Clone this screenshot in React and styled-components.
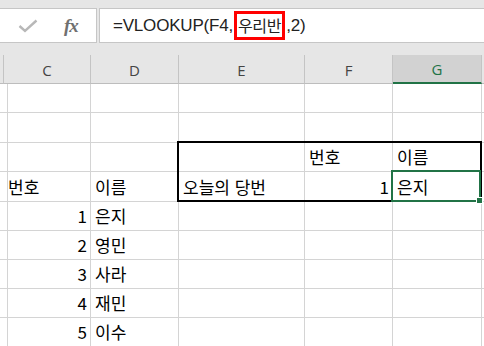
import React from "react";
import styled, { createGlobalStyle } from "styled-components";

const GlobalStyle = createGlobalStyle`
  html, body {
    margin: 0;
    padding: 0;
    background: #fff;
  }
  body {
    width: 484px;
    height: 346px;
    overflow: hidden;
    font-family: "Noto Sans CJK KR", sans-serif;
  }
`;

const Page = styled.div`
  display: flex;
  flex-direction: column;
  width: 484px;
  height: 346px;
  overflow: hidden;
  background: #e6e6e6;
`;

const FormulaBar = styled.div`
  display: flex;
  gap: 2px;
  padding-top: 8px;
  padding-bottom: 12px;
`;

const NameBox = styled.div`
  box-sizing: border-box;
  width: 97px;
  height: 35px;
  background: #fff;
  border: 1px solid #c6c6c6;
  border-left: none;
  display: flex;
  align-items: center;
  padding-left: 18px;
`;

const Fx = styled.span`
  margin-left: 26px;
  font-family: "Liberation Serif", serif;
  font-style: italic;
  font-weight: bold;
  font-size: 19px;
  color: #707070;
  letter-spacing: -1px;
`;

const FormulaInput = styled.div`
  box-sizing: border-box;
  flex: 1;
  height: 35px;
  background: #fff;
  border: 1px solid #c6c6c6;
  border-right: none;
  display: flex;
  align-items: center;
  padding-left: 13px;
  font-family: "Liberation Sans", "Noto Sans CJK KR", sans-serif;
  font-size: 17px;
  letter-spacing: -0.2px;
  color: #222;
  white-space: nowrap;
`;

const Highlight = styled.span`
  display: inline-block;
  border: 3px solid #ff0000;
  padding: 2px 1px;
  margin: 0 1px 0 1px;
  line-height: 19px;
  font-family: "Noto Sans CJK KR", sans-serif;
  font-size: 16px;
  letter-spacing: -0.3px;
`;

const Sheet = styled.div`
  display: grid;
  grid-template-columns: 4px 87px 88px 126px 88px 89px 1fr;
  grid-template-rows: 29px 29px 30px 29px 30px 29px 29px 29px 29px 29px;
  background: #fff;
`;

const HeadCell = styled.div`
  box-sizing: border-box;
  background: ${(p) => (p.$active ? "#d2d2d2" : "#e6e6e6")};
  border-right: 1px solid #c4c4c4;
  border-bottom: ${(p) => (p.$active ? "2px solid #217346" : "1px solid #bdbdbd")};
  display: flex;
  align-items: center;
  justify-content: center;
  font-family: "Open Sans", "Noto Sans", sans-serif;
  font-size: 15px;
  color: ${(p) => (p.$active ? "#217346" : "#444")};
  padding-top: 1px;
`;

const Cell = styled.div`
  position: relative;
  box-sizing: border-box;
  border-right: 1px solid #d4d4d4;
  border-bottom: 1px solid #d4d4d4;
  display: flex;
  align-items: flex-end;
  justify-content: ${(p) => (p.$num ? "flex-end" : "flex-start")};
  padding: 0 3px 4px 4px;
  font-family: "Noto Sans CJK KR", sans-serif;
  font-size: 17px;
  line-height: 20px;
  word-spacing: 1px;
  color: #000;
  white-space: nowrap;

  &::after {
    content: "";
    display: ${(p) => (p.$t || p.$r || p.$b || p.$l ? "block" : "none")};
    position: absolute;
    top: -2px;
    left: -2px;
    right: -1px;
    bottom: -1px;
    border-style: solid;
    border-color: #000;
    border-width: ${(p) =>
      `${p.$t ? 2 : 0}px ${p.$r ? 2 : 0}px ${p.$b ? 2 : 0}px ${p.$l ? 2 : 0}px`};
    pointer-events: none;
  }
`;

const Selection = styled.div`
  position: absolute;
  top: -2px;
  left: -2px;
  right: 0;
  bottom: -1px;
  border: 2px solid #217346;
  z-index: 2;
`;

const Handle = styled.div`
  position: absolute;
  right: -4px;
  bottom: -4px;
  width: 5px;
  height: 5px;
  background: #217346;
  border: 1px solid #fff;
`;

const columns = ["", "C", "D", "E", "F", "G", ""];

const rows = [
  [{}, {}, {}, {}, {}, {}, {}],
  [{}, {}, {}, {}, {}, {}, {}],
  [{}, {}, {}, { t: 1, l: 1 }, { v: "번호", t: 1 }, { v: "이름", t: 1, r: 1 }, {}],
  [
    {},
    { v: "번호" },
    { v: "이름" },
    { v: "오늘의 당번", b: 1, l: 1 },
    { v: "1", num: 1, b: 1 },
    { v: "은지", b: 1, r: 1, sel: 1 },
    {},
  ],
  [{}, { v: "1", num: 1 }, { v: "은지" }, {}, {}, {}, {}],
  [{}, { v: "2", num: 1 }, { v: "영민" }, {}, {}, {}, {}],
  [{}, { v: "3", num: 1 }, { v: "사라" }, {}, {}, {}, {}],
  [{}, { v: "4", num: 1 }, { v: "재민" }, {}, {}, {}, {}],
  [{}, { v: "5", num: 1 }, { v: "이수" }, {}, {}, {}, {}],
];

function CheckIcon() {
  return (
    <svg width="20" height="14" viewBox="0 0 20 14">
      <path d="M1.5 7 L7 12 L18.5 1.5" fill="none" stroke="#b8b8b8" strokeWidth="2.4" />
    </svg>
  );
}

export default function App() {
  return (
    <Page>
      <GlobalStyle />
      <FormulaBar>
        <NameBox>
          <CheckIcon />
          <Fx>fx</Fx>
        </NameBox>
        <FormulaInput>
          =VLOOKUP(F4,<Highlight>우리반</Highlight>,2)
        </FormulaInput>
      </FormulaBar>
      <Sheet>
        {columns.map((c, i) => (
          <HeadCell key={"h" + i} $active={c === "G"}>
            {c}
          </HeadCell>
        ))}
        {rows.map((row, r) =>
          row.map((cell, c) => (
            <Cell
              key={r + "-" + c}
              $num={cell.num}
              $t={cell.t}
              $r={cell.r}
              $b={cell.b}
              $l={cell.l}
            >
              {cell.v}
              {cell.sel && (
                <Selection>
                  <Handle />
                </Selection>
              )}
            </Cell>
          ))
        )}
      </Sheet>
    </Page>
  );
}
